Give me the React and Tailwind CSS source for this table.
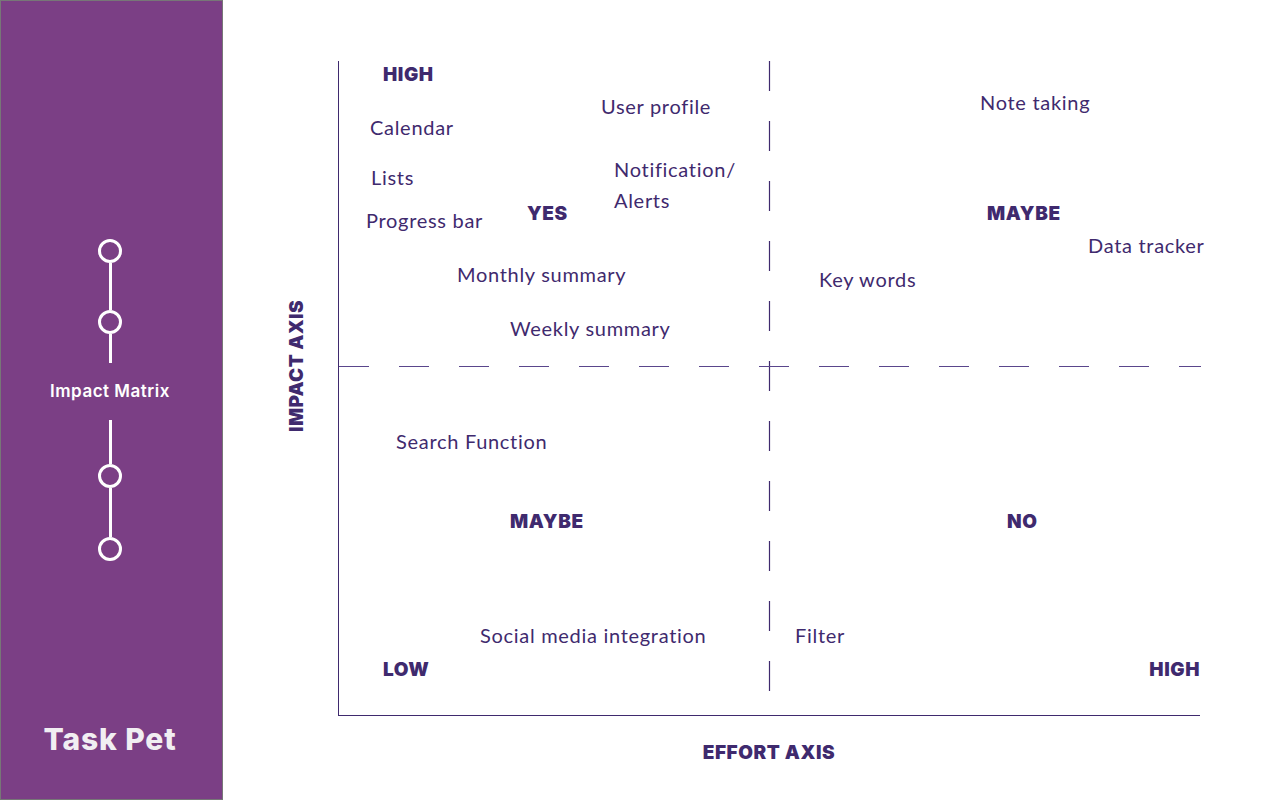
import React from "react";

const ink = "text-[#3f2a6e]";

// matrix items, positioned on the chart canvas (relative to the chart's top-left corner)
const items = [
  { label: "User profile", left: 262, top: 33 },
  { label: "Calendar", left: 31, top: 54 },
  { label: "Lists", left: 32, top: 104 },
  { label: "Progress bar", left: 27, top: 147 },
  { label: "Monthly summary", left: 118, top: 201 },
  { label: "Weekly summary", left: 171, top: 255 },
  { label: "Note taking", left: 641, top: 29 },
  { label: "Data tracker", left: 749, top: 172 },
  { label: "Key words", left: 480, top: 206 },
  { label: "Search Function", left: 57, top: 368 },
  { label: "Social media integration", left: 141, top: 562 },
  { label: "Filter", left: 456, top: 562 },
];

const tags = [
  { label: "HIGH", left: 44, top: 2 },
  { label: "YES", left: 188, top: 141 },
  { label: "MAYBE", left: 648, top: 141 },
  { label: "MAYBE", left: 171, top: 449 },
  { label: "NO", left: 668, top: 449 },
  { label: "LOW", left: 44, top: 597 },
];

const Node = () => (
  <div className="h-6 w-6 rounded-full border-[3px] border-white" />
);

const Stem = ({ h }) => <div className={`w-[3px] bg-white ${h}`} />;

export default function App() {
  return (
    <div className="flex h-[800px] w-[1280px] bg-white font-['Lato',sans-serif]">
      {/* sidebar */}
      <aside className="flex w-[223px] shrink-0 flex-col items-center border border-[#777] bg-[#7b3f85] pr-[3px] pt-[238px]">
        <Node />
        <Stem h="h-[47px]" />
        <Node />
        <Stem h="h-[29px]" />
        <div className="flex h-[57px] items-center font-['Inter',sans-serif] text-[17px] font-semibold tracking-[0.03em] text-white">
          Impact Matrix
        </div>
        <Stem h="h-[44px]" />
        <Node />
        <Stem h="h-[49px]" />
        <Node />
        <div className="mt-[156px] font-['Inter',sans-serif] text-[30px] font-extrabold tracking-[0.03em] text-[#f1eef2]">
          Task Pet
        </div>
      </aside>

      {/* impact matrix */}
      <main className="flex flex-1 flex-col pl-[115px] pt-[61px]">
        <div className="relative h-[655px] w-[862px] border-b border-l border-[#3f2a6e]">
          <svg className="absolute inset-0" width="862" height="655">
            <line x1="430.5" y1="0" x2="430.5" y2="632" stroke="#3f2a6e" strokeWidth="1.2" strokeDasharray="30 30" />
            <line x1="0" y1="305.5" x2="862" y2="305.5" stroke="#5a468c" strokeWidth="1.2" strokeDasharray="30 30" />
          </svg>

          <div className={`absolute left-[-42px] top-[305px] -translate-x-1/2 -translate-y-1/2 -rotate-90 whitespace-nowrap font-['Inter',sans-serif] text-[19px] font-black tracking-[0.02em] ${ink}`}>
            IMPACT AXIS
          </div>

          {items.map((it) => (
            <div
              key={it.label}
              className={`absolute whitespace-nowrap text-[20px] leading-6 tracking-[0.035em] ${ink}`}
              style={{ left: it.left, top: it.top }}
            >
              {it.label}
            </div>
          ))}

          <div className={`absolute left-[275px] top-[93px] text-[20px] leading-[31px] tracking-[0.035em] ${ink}`}>
            Notification/
            <br />
            Alerts
          </div>

          {tags.map((t, i) => (
            <div
              key={i}
              className={`absolute font-['Inter',sans-serif] text-[19px] font-black leading-6 tracking-[0.03em] ${ink}`}
              style={{ left: t.left, top: t.top }}
            >
              {t.label}
            </div>
          ))}
          <div className={`absolute right-0 top-[597px] font-['Inter',sans-serif] text-[19px] font-black leading-6 tracking-[0.03em] ${ink}`}>
            HIGH
          </div>
        </div>

        <div className={`mt-[23px] w-[862px] text-center font-['Inter',sans-serif] text-[19px] font-black tracking-[0.03em] ${ink}`}>
          EFFORT AXIS
        </div>
      </main>
    </div>
  );
}
